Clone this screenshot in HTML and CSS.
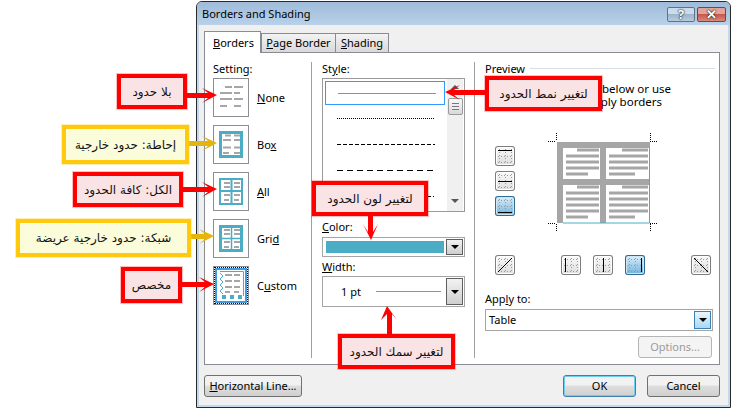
FILE: index.html
```html
<!DOCTYPE html>
<html lang="ar">
<head>
    <meta charset="UTF-8">
    <title>Borders and Shading</title>
    <link rel="stylesheet" href="styles.css">
</head>
<body>
<svg class="defs" width="0" height="0">
    <symbol id="rows" viewBox="0 0 36 39">
        <path d="M12 9h7M21 9h9M7 15h12M21 15h6M7 21h12M21 21h9M7 28h7M21 28h7" stroke="#a6a6a6" stroke-width="2" fill="none"/>
    </symbol>
    <symbol id="rows-box" viewBox="0 0 36 39">
        <path d="M12 10.500h6M21 10.500h6M10 15h8M21 15h6M10 22.500h8M21 22.500h7M10 28h6M21 28h7" stroke="#a6a6a6" stroke-width="2" fill="none"/>
    </symbol>
    <symbol id="rows-cell" viewBox="0 0 36 39">
        <path d="M11 11h6M21 11h6M11 15h6M21 15h6M11 23h6M21 23h6M11 28h5M21 28h5" stroke="#a6a6a6" stroke-width="2" fill="none"/>
    </symbol>
    <symbol id="dots" viewBox="0 0 20 20">
        <path d="M3 4.500h14M3 10.500h14M3 16.500h14M4.500 3v14M10.500 3v14M16.500 3v14" stroke="#9a9a9a" stroke-width="1" stroke-dasharray="1 2" fill="none"/>
    </symbol>
</svg>

<div class="page">
    <div class="dialog">
        <div class="titlebar">
            <span class="title">Borders and Shading</span>
            <span class="win-btn help">?</span>
            <span class="win-btn close">✕</span>
        </div>

        <div class="tabs">
            <div class="tab active"><u>B</u>orders</div>
            <div class="tab tab-page"><u>P</u>age Border</div>
            <div class="tab tab-shading"><u>S</u>hading</div>
        </div>

        <div class="panel">
            <div class="col col-setting">
                <div class="label">Setting:</div>
                <div class="setting-list">
                    <div class="setting">
                        <div class="setting-icon"><svg width="34" height="37" viewBox="1 1 34 37"><use href="#rows" width="36" height="39"/></svg></div>
                        <span><u>N</u>one</span>
                    </div>
                    <div class="setting">
                        <div class="setting-icon"><svg width="34" height="37" viewBox="1 1 34 37"><use href="#rows-box" width="36" height="39"/><rect x="7.500" y="7.500" width="21" height="24" fill="none" stroke="#4bacc6" stroke-width="3"/></svg></div>
                        <span>Bo<u>x</u></span>
                    </div>
                    <div class="setting">
                        <div class="setting-icon"><svg width="34" height="37" viewBox="1 1 34 37"><use href="#rows-cell" width="36" height="39"/><path d="M7 7h22v25H7zM18.500 7v25M7 19h22" fill="none" stroke="#4bacc6" stroke-width="2"/></svg></div>
                        <span><u>A</u>ll</span>
                    </div>
                    <div class="setting">
                        <div class="setting-icon"><svg width="34" height="37" viewBox="1 1 34 37"><use href="#rows-cell" width="36" height="39"/><rect x="7.500" y="7.500" width="21" height="24" fill="none" stroke="#4bacc6" stroke-width="3"/><path d="M18.500 7v25M7 19.500h22" fill="none" stroke="#4bacc6" stroke-width="1.500"/></svg></div>
                        <span>Gri<u>d</u></span>
                    </div>
                    <div class="setting">
                        <div class="setting-icon custom"><svg width="34" height="37" viewBox="1 1 34 37">
                            <rect x="3" y="3" width="30" height="33" fill="none" stroke="#3d9ce0" stroke-width="2"/>
                            <path d="M12 9h7M21 9h6M12 15h7M21 15h6M12 21h7M21 21h6M12 26h5M21 26h5" stroke="#a6a6a6" stroke-width="2" fill="none"/>
                            <path d="M7 5.500h23.500V30M7 7l3 3-3 3 3 3-3 3 3 3-3 3 3 3" fill="none" stroke="#4bacc6" stroke-width="1"/>
                            <path d="M9 29h4v4H9zM17 29h4v4h-4zM25 29h4v4h-4z" fill="#4bacc6"/>
                        </svg></div>
                        <span>C<u>u</u>stom</span>
                    </div>
                </div>
            </div>

            <div class="col col-style">
                <div class="label">St<u>y</u>le:</div>
                <div class="listbox">
                    <div class="list-rows">
                        <div class="list-row selected"><i class="line solid"></i></div>
                        <div class="list-row"><i class="line dotted"></i></div>
                        <div class="list-row"><i class="line dashed"></i></div>
                        <div class="list-row"><i class="line long-dash"></i></div>
                        <div class="list-row"><i class="line dash-dot"></i></div>
                    </div>
                    <div class="scrollbar">
                        <span class="scroll-up"></span>
                        <span class="thumb"></span>
                        <span class="scroll-down"></span>
                    </div>
                </div>
                <div class="label label-gap"><u>C</u>olor:</div>
                <div class="combo combo-color">
                    <div class="swatch"></div>
                    <div class="drop"></div>
                </div>
                <div class="label label-gap-wide"><u>W</u>idth:</div>
                <div class="combo combo-width">
                    <div class="width-value">1 pt <i class="line solid width-line"></i></div>
                    <div class="drop"></div>
                </div>
            </div>

            <div class="col col-preview">
                <div class="preview-head"><span>Preview</span><i></i></div>
                <p class="hint"><span>Click on diagram below or use</span><span class="hint-second">buttons to apply borders</span></p>
                <div class="preview-zone">
                    <div class="edge-btns">
                        <div class="edge"><svg width="20" height="20"><use href="#dots"/><path d="M3 4.500h14" stroke="#000"/></svg></div>
                        <div class="edge"><svg width="20" height="20"><use href="#dots"/><path d="M3 10.500h14" stroke="#000"/></svg></div>
                        <div class="edge on"><svg width="20" height="20"><use href="#dots"/><path d="M3 16.500h14" stroke="#000"/></svg></div>
                    </div>
                    <svg class="diagram" width="112" height="100" viewBox="548 132 112 100">
                        <path d="M548 140.500h8M556.500 132v8M650 140.500h8M650.500 132v8M548 222.500h8M556.500 223v8M650 222.500h8M650.500 223v8" stroke="#000" stroke-dasharray="1 1" fill="none"/>
                        <path d="M557 141h93v6h-44v31h44v6h-44v38h-6v-38h-37v38h-6zM563 147v31h37v-31z" fill="#a6a6a6"/>
                        <path d="M649.500 147v75H563" fill="none" stroke="#4bacc6"/>
                        <path d="M577 149h22M566 155h33M566 161h33M566 167h33M566 173h22M622 149h26M609 155h39M609 161h39M609 167h39M609 173h26M577 186h22M566 192h33M566 198h33M566 204h33M566 210h33M566 216h22M622 186h26M609 192h39M609 198h39M609 204h39M609 210h39M609 216h26" stroke="#a6a6a6" stroke-width="3" fill="none"/>
                    </svg>
                </div>
                <div class="edge-row">
                    <div class="edge"><svg width="20" height="20"><use href="#dots"/><path d="M3 17L17 3" stroke="#000"/></svg></div>
                    <div class="edge-group">
                        <div class="edge"><svg width="20" height="20"><use href="#dots"/><path d="M4.500 3v14" stroke="#000"/></svg></div>
                        <div class="edge"><svg width="20" height="20"><use href="#dots"/><path d="M10.500 3v14" stroke="#000"/></svg></div>
                        <div class="edge on"><svg width="20" height="20"><use href="#dots"/><path d="M16.500 3v14" stroke="#000"/></svg></div>
                    </div>
                    <div class="edge"><svg width="20" height="20"><use href="#dots"/><path d="M3 3l14 14" stroke="#000"/></svg></div>
                </div>
                <div class="label apply-label">App<u>l</u>y to:</div>
                <div class="combo combo-apply">
                    <div class="apply-value">Table</div>
                    <div class="drop drop-hot"></div>
                </div>
                <div class="options-row"><div class="btn disabled">Options...</div></div>
            </div>
        </div>

        <div class="footer">
            <div class="btn btn-line"><u>H</u>orizontal Line...</div>
            <div class="footer-right">
                <div class="btn btn-main default">OK</div>
                <div class="btn btn-main">Cancel</div>
            </div>
        </div>
    </div>

    <svg class="arrows" width="732" height="409">
        <polygon fill="#ff0000" points="187,93 208,93 202,88 217,95 202,103 208,98 187,98"/>
        <polygon fill="#e6b40e" points="189,141 208,141 202,136 217,143 202,151 208,146 189,146"/>
        <polygon fill="#ff0000" points="183,187 208,187 202,182 217,189 202,197 208,192 183,192"/>
        <polygon fill="#e6b40e" points="191,234 205,234 199,229 214,236 199,244 205,239 191,239"/>
        <polygon fill="#ff0000" points="182,282 205,282 199,277 214,284 199,292 205,287 182,287"/>
        <polygon fill="#ff0000" points="485,90 454,90 460,85 445,92 460,100 454,95 485,95"/>
        <polygon fill="#ff0000" points="368,216 368,232 363,224 371,240 378,224 373,232 373,216"/>
        <polygon fill="#ff0000" points="392,334 392,314 397,320 387,306 381,320 387,314 387,334"/>
    </svg>

    <div class="note red note-none">بلا حدود</div>
    <div class="note yellow note-box">إحاطة: حدود خارجية</div>
    <div class="note red note-all">الكل: كافة الحدود</div>
    <div class="note yellow note-grid">شبكة: حدود خارجية عريضة</div>
    <div class="note red note-custom">مخصص</div>
    <div class="note red note-style">لتغيير نمط الحدود</div>
    <div class="note red note-color">لتغيير لون الحدود</div>
    <div class="note red note-width">لتغيير سمك الحدود</div>
</div>
</body>
</html>
```

FILE: styles.css
```css
* {
    margin: 0;
    padding: 0;
    box-sizing: border-box;
}

body {
    background: #fff;
    font-family: "Noto Sans", "Open Sans", sans-serif;
    font-size: 11px;
    color: #000;
    overflow: hidden;
}

.defs {
    position: absolute;
}

.page {
    position: relative;
    width: 732px;
    height: 409px;
    padding: 1px 0 0 196px;
}

.dialog {
    width: 535px;
    height: 407px;
    border: 1px solid #2a2a2a;
    border-radius: 6px 6px 0 0;
    background: #f0f0f0;
    box-shadow: inset 0 0 0 2px #c3d8ec;
    padding: 0 2px 2px;
    display: flex;
    flex-direction: column;
}

.titlebar {
    display: flex;
    align-items: flex-start;
    height: 23px;
    margin: 0 -2px;
    padding: 5px 4px 0 5px;
    gap: 2px;
    border-radius: 5px 5px 0 0;
    background: linear-gradient(#9fbbd9, #b9d1e9);
}

.title {
    flex: 1;
    font-size: 11px;
    line-height: 14px;
}

.win-btn {
    height: 15px;
    border: 1px solid #5f7287;
    border-radius: 2px;
    color: #fff;
    font-size: 13px;
    line-height: 12px;
    font-weight: bold;
    text-align: center;
    text-shadow: 0 0 2px #111, 0 0 1px #111;
}

.help {
    width: 28px;
    background: linear-gradient(#c9dbec 45%, #9db4cb 50%, #b8ccdf);
}

.close {
    width: 29px;
    border-color: #7f423c;
    background: linear-gradient(#e0a49c 45%, #c8584c 50%, #d88a7f);
}

.tabs {
    display: flex;
    align-items: flex-end;
    height: 27px;
    margin-left: 5px;
    gap: 0;
}

.tab {
    height: 19px;
    border: 1px solid #898c95;
    border-bottom: 0;
    background: linear-gradient(#f3f3f3, #d9d9d9);
    line-height: 18px;
    text-align: center;
}

.tab-page {
    width: 75px;
}

.tab-shading {
    width: 54px;
    margin-left: -1px;
}

.tab.active {
    height: 22px;
    width: 57px;
    padding: 2px 0 0 8px;
    margin-bottom: -1px;
    text-align: left;
    background: #fff;
    position: relative;
    z-index: 1;
}

.panel {
    width: 516px;
    height: 313px;
    margin-left: 5px;
    border: 1px solid #898c95;
    background: #fff;
    display: grid;
    grid-template-columns: 107px 163px 1fr;
    padding: 9px 0 6px;
}

.col {
    display: flex;
    flex-direction: column;
}

.col-setting, .col-style {
    border-right: 1px solid #a0a0a0;
}

.col-setting {
    padding-left: 8px;
}

.col-style {
    padding-left: 10px;
}

.col-preview {
    padding-left: 10px;
}

.label {
    height: 16px;
    line-height: 14px;
}

.setting-list {
    display: flex;
    flex-direction: column;
    gap: 8px;
}

.setting {
    display: flex;
    align-items: center;
    gap: 8px;
}

.setting-icon {
    width: 36px;
    height: 39px;
    border: 1px solid #8c8e94;
    background: #fff;
}

.setting-icon.custom {
    outline: 1px dotted #000;
    outline-offset: -2px;
}

.listbox {
    display: flex;
    width: 143px;
    height: 134px;
    border: 1px solid #9a9a9a;
    overflow: hidden;
}

.list-rows {
    flex: 1;
    padding: 2px 2px 0;
}

.list-row {
    height: 26px;
    display: flex;
    align-items: center;
    padding: 0 8px 0 12px;
}

.list-row.selected {
    height: 24px;
    border: 1px solid #3399ff;
}

.line {
    display: block;
    width: 98px;
    height: 1px;
}

.solid {
    background: #4bacc6;
}

.dotted {
    background: repeating-linear-gradient(90deg, #000 0 1px, #fff 1px 2px);
}

.dashed {
    background: repeating-linear-gradient(90deg, #000 0 4px, #fff 4px 6px);
}

.long-dash {
    background: repeating-linear-gradient(90deg, #000 0 6px, #fff 6px 10px);
}

.dash-dot {
    background: repeating-linear-gradient(90deg, #000 0 6px, #fff 6px 8px, #000 8px 9px, #fff 9px 11px);
}

.scrollbar {
    width: 16px;
    margin-right: 1px;
    background: #f0f0f0;
    position: relative;
    display: flex;
    flex-direction: column;
    align-items: center;
    padding-top: 19px;
}

.scroll-up, .scroll-down {
    position: absolute;
    left: 4px;
    border-left: 4px solid transparent;
    border-right: 4px solid transparent;
}

.scroll-up {
    top: 6px;
    border-bottom: 4px solid #555;
}

.scroll-down {
    bottom: 8px;
    border-top: 4px solid #555;
}

.thumb {
    width: 15px;
    height: 17px;
    border: 1px solid #9a9a9a;
    border-radius: 2px;
    background: repeating-linear-gradient(#777 0 1px, #eee 1px 3px) center / 7px 7px no-repeat, linear-gradient(#fafafa, #d8d8d8);
}

.label-gap {
    margin-top: 8px;
    height: 17px;
}

.label-gap-wide {
    margin-top: 2px;
    height: 17px;
    line-height: 15px;
}

.combo {
    display: flex;
    width: 143px;
    border: 1px solid #a5a5a5;
    background: #fff;
    padding: 1px;
}

.combo-color {
    height: 20px;
}

.combo-width {
    height: 31px;
}

.swatch {
    flex: 1;
    margin: 2px;
    background: #4bacc6;
}

.drop {
    width: 17px;
    border: 1px solid #5f5f5f;
    background: linear-gradient(#f2f2f2, #cfcfcf);
    position: relative;
}

.drop::after {
    content: "";
    position: absolute;
    left: 4px;
    top: calc(50% - 2px);
    border-left: 4px solid transparent;
    border-right: 4px solid transparent;
    border-top: 4px solid #000;
}

.drop-hot {
    border-color: #3c7fb1;
    background: linear-gradient(#eaf6fd, #a7d9f5);
}

.width-value {
    flex: 1;
    display: flex;
    align-items: center;
    padding-left: 17px;
    gap: 15px;
}

.width-line {
    width: 65px;
}

.preview-head {
    height: 16px;
    display: flex;
    align-items: flex-start;
    gap: 5px;
    line-height: 14px;
}

.preview-head i {
    display: block;
    width: 185px;
    height: 1px;
    margin-top: 6px;
    background: #d5dfe5;
}

.hint {
    width: 186px;
    margin-top: 4px;
    font-size: 11.5px;
    line-height: 13px;
    text-align: right;
}

.hint span {
    display: block;
    white-space: nowrap;
}

.hint-second {
    padding-right: 9px;
}

.preview-zone {
    display: flex;
    margin: 25px 0 0 10px;
}

.edge-btns {
    display: flex;
    flex-direction: column;
    gap: 5px;
    padding-top: 13px;
    margin-right: 33px;
}

.edge {
    width: 20px;
    height: 20px;
    border-radius: 3px;
    box-shadow: inset 0 0 0 1px #7d7d7d, inset 0 0 0 2px #fff;
    background: linear-gradient(#fbfbfb, #dcdcdc);
}

.edge svg {
    display: block;
}

.edge.on {
    box-shadow: inset 0 0 0 1px #2f6a94, inset 0 0 0 2px #cde6f6;
    background: linear-gradient(#dff1fc, #6cb0da);
}

.edge-row {
    display: flex;
    justify-content: space-between;
    width: 216px;
    margin: 22px 0 0 10px;
}

.edge-group {
    display: flex;
    gap: 12px;
}

.apply-label {
    margin-top: 17px;
    height: 17px;
}

.combo-apply {
    width: 228px;
    height: 22px;
}

.apply-value {
    flex: 1;
    padding-left: 2px;
    line-height: 18px;
}

.options-row {
    display: flex;
    justify-content: flex-end;
    width: 227px;
    margin-top: 5px;
}

.btn {
    height: 22px;
    border: 1px solid #707070;
    border-radius: 3px;
    background: linear-gradient(#f2f2f2 45%, #dedede 50%, #cfcfcf);
    text-align: center;
    line-height: 20px;
}

.btn.disabled {
    width: 74px;
    border-color: #b5b5b5;
    background: #f4f4f4;
    color: #9a9a9a;
}

.footer {
    display: flex;
    justify-content: space-between;
    width: 516px;
    margin: 10px 0 0 5px;
}

.footer-right {
    display: flex;
    gap: 11px;
}

.btn-line {
    width: 98px;
}

.btn-main {
    width: 73px;
}

.btn.default {
    border-color: #3c7fb1;
    box-shadow: inset 0 0 0 1px #6fd0ee;
}

.arrows {
    position: absolute;
    left: 0;
    top: 0;
}

.note {
    position: absolute;
    display: flex;
    align-items: center;
    justify-content: center;
    border: 4px solid;
    font-family: "DejaVu Sans", sans-serif;
    font-size: 12px;
    direction: rtl;
    white-space: nowrap;
    color: #111;
}

.red {
    border-color: #ff0000;
    background: #fae3e4;
    box-shadow: 0 0 0 1px rgba(255, 0, 0, 0.25);
}

.yellow {
    border-color: #ffc90e;
    background: #fbfcd9;
    box-shadow: 0 0 0 1px rgba(255, 201, 14, 0.3);
}

.note-none {
    left: 117px;
    top: 74px;
    width: 70px;
    height: 35px;
}

.note-box {
    left: 62px;
    top: 125px;
    width: 127px;
    height: 39px;
}

.note-all {
    left: 73px;
    top: 172px;
    width: 110px;
    height: 35px;
}

.note-grid {
    left: 16px;
    top: 219px;
    width: 175px;
    height: 38px;
}

.note-custom {
    left: 121px;
    top: 267px;
    width: 61px;
    height: 36px;
}

.note-style {
    left: 485px;
    top: 76px;
    width: 117px;
    height: 35px;
}

.note-color {
    left: 312px;
    top: 181px;
    width: 116px;
    height: 35px;
}

.note-width {
    left: 338px;
    top: 334px;
    width: 117px;
    height: 35px;
}
```
